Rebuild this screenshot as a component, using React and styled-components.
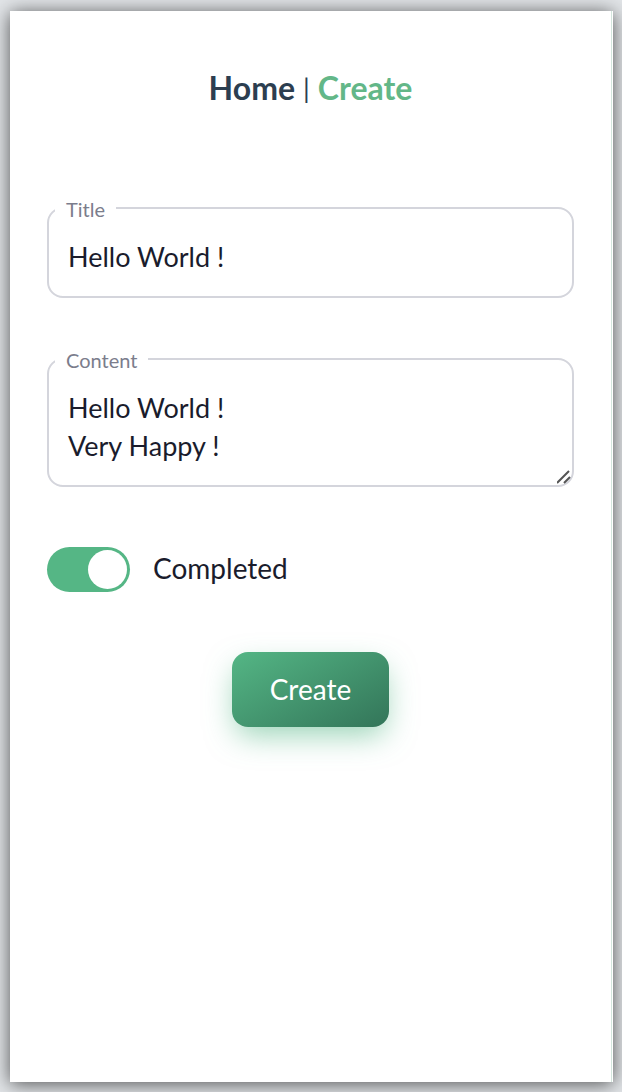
import React from 'react';
import styled, { createGlobalStyle } from 'styled-components';

const GlobalStyle = createGlobalStyle`
  *, *::before, *::after { box-sizing: border-box; }
  body {
    margin: 0;
    background: #e2e5e8;
    color: #1a1c2c;
    font-family: Lato, "Liberation Sans", sans-serif;
    font-size: 27px;
    line-height: 38px;
  }
`;

const Page = styled.div`
  display: flex;
  min-height: 100vh;
  padding: 11px 9px 10px 10px;
  overflow: hidden;
`;

const Card = styled.main`
  flex: 1;
  min-width: 0;
  padding: 58px 39px 58px 37px;
  background: #fff;
  box-shadow: 0 2px 18px rgba(0, 0, 0, 0.65), inset -1px 0 #fff, inset -2px 0 #d3e6dd;
`;

const Nav = styled.nav`
  display: flex;
  justify-content: center;
  gap: 8px;
  margin-bottom: 100px;
  color: #2c3e50;
`;

const NavLink = styled.a`
  color: ${({ $active }) => ($active ? '#63b788' : '#2c3e50')};
  font-size: 32px;
  font-weight: 700;
  text-decoration: none;
`;

const Form = styled.form`
  display: flex;
  flex-direction: column;
  gap: 60px;
`;

const Field = styled.div`
  position: relative;
  display: flex;
`;

const FieldLabel = styled.label`
  position: absolute;
  top: -12px;
  left: 8px;
  padding: 0 11px;
  background: #fff;
  color: #7b7d8c;
  font-size: 20px;
  line-height: 28px;
`;

const TextInput = styled.input`
  width: 100%;
  min-width: 0;
  margin: 0;
  padding: 29px 19px 20px;
  border: 2px solid #d4d5dc;
  border-radius: 16px;
  outline: none;
  background: #fff;
  color: inherit;
  font: inherit;
`;

const TextArea = styled(TextInput).attrs({ as: 'textarea' })`
  display: block;
  overflow: hidden;
  resize: none;
`;

const Grip = styled.svg`
  position: absolute;
  right: 2px;
  bottom: 2px;
`;

const SwitchRow = styled.label`
  display: flex;
  align-items: flex-start;
  gap: 23px;
  font-size: 28px;
  line-height: 42px;
`;

const Switch = styled.input`
  appearance: none;
  display: flex;
  align-items: center;
  justify-content: ${({ checked }) => (checked ? 'flex-end' : 'flex-start')};
  width: 83px;
  height: 45px;
  margin: 0;
  padding: 3px;
  border-radius: 23px;
  background: ${({ checked }) => (checked ? '#55b685' : '#d4d5dc')};

  &::before {
    content: "";
    width: 39px;
    height: 39px;
    border-radius: 50%;
    background: #fff;
  }
`;

const SubmitButton = styled.button`
  align-self: center;
  padding: 18px 38px 19px;
  border: 0;
  border-radius: 16px;
  background: linear-gradient(150deg, #54b685 0%, #337559 100%);
  box-shadow: 0 12px 30px -4px rgba(85, 182, 133, 0.6);
  color: #fff;
  font: inherit;
  font-size: 28px;
`;

export default function App() {
  const [completed, setCompleted] = React.useState(true);
  return (
    <>
      <GlobalStyle />
      <Page>
        <Card>
          <Nav>
            <NavLink href="#home">Home</NavLink>
            <span>|</span>
            <NavLink href="#create" $active>Create</NavLink>
          </Nav>
          <Form onSubmit={(e) => e.preventDefault()}>
            <Field>
              <TextInput id="title" type="text" defaultValue="Hello World !" />
              <FieldLabel htmlFor="title">Title</FieldLabel>
            </Field>
            <Field>
              <TextArea id="content" rows={2} defaultValue={'Hello World !\nVery Happy !'} />
              <FieldLabel htmlFor="content">Content</FieldLabel>
              <Grip width="15" height="15" viewBox="0 0 15 15" fill="none" stroke="#555" strokeWidth="2" aria-hidden="true">
                <path d="M0 13 12 1M7 13 13 7" />
              </Grip>
            </Field>
            <SwitchRow>
              <Switch type="checkbox" checked={completed} onChange={(e) => setCompleted(e.target.checked)} />
              Completed
            </SwitchRow>
            <SubmitButton type="submit">Create</SubmitButton>
          </Form>
        </Card>
      </Page>
    </>
  );
}
